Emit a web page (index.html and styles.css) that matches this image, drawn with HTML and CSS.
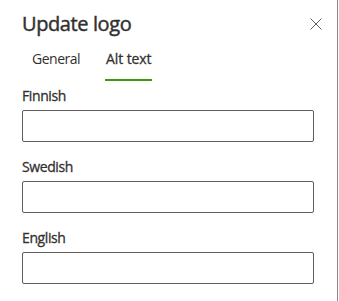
FILE: index.html
```html
<!DOCTYPE html>
<html lang="en">
<head>
<meta charset="utf-8">
<title>Update logo</title>
<link rel="stylesheet" href="styles.css">
</head>
<body>
<div class="panel">
  <div class="header">
    <h1 class="title">Update logo</h1>
    <button class="close" aria-label="Close">
      <svg width="12" height="12" viewBox="0 0 12 12"><path d="M0.5 0.5 L11.5 11.5 M11.5 0.5 L0.5 11.5" stroke="#605e5c" stroke-width="1" fill="none"/></svg>
    </button>
  </div>
  <div class="tabs">
    <span class="tab">General</span>
    <span class="tab active">Alt text</span>
  </div>
  <div class="fields">
    <div class="field">
      <label class="label">Finnish</label>
      <input class="input" type="text">
    </div>
    <div class="field">
      <label class="label">Swedish</label>
      <input class="input" type="text">
    </div>
    <div class="field">
      <label class="label">English</label>
      <input class="input" type="text">
    </div>
  </div>
</div>
</body>
</html>
```
FILE: styles.css
```css
html, body {
  margin: 0;
  padding: 0;
  background: #ffffff;
}
body {
  font-family: "Open Sans", "Noto Sans", sans-serif;
  color: #323130;
}
.panel {
  box-sizing: border-box;
  width: 338px;
  height: 301px;
  border-right: 1px solid #8a8886;
  padding-left: 22px;
  overflow: hidden;
}
.header {
  display: flex;
  align-items: flex-start;
  justify-content: space-between;
  padding-top: 10px;
  height: 27px;
}
.title {
  margin: 0;
  font-size: 20px;
  line-height: 28px;
  font-weight: 400;
  letter-spacing: -0.4px;
  -webkit-text-stroke: 0.45px #323130;
  color: #323130;
}
.close {
  border: 0;
  background: none;
  padding: 0;
  margin: 8px 15px 0 0;
  width: 12px;
  height: 12px;
  display: flex;
}
.tabs {
  display: flex;
  gap: 24px;
  padding-left: 9px;
  height: 44px;
}
.tab {
  position: relative;
  font-size: 14px;
  line-height: 44px;
  padding: 0 1px;
  letter-spacing: -0.5px;
  color: #323130;
}
.tab.active {
  letter-spacing: -0.1px;
  -webkit-text-stroke: 0.3px #323130;
}
.tab.active::after {
  content: "";
  position: absolute;
  left: 0;
  right: 0;
  bottom: 0;
  height: 2px;
  background: #3c9a0c;
}
.fields {
  display: flex;
  flex-direction: column;
  gap: 10px;
  width: 292px;
}
.field {
  display: flex;
  flex-direction: column;
}
.label {
  font-size: 14px;
  line-height: 20px;
  font-weight: 400;
  letter-spacing: -0.4px;
  -webkit-text-stroke: 0.3px #323130;
  padding: 5px 0 4px;
  color: #323130;
}
.input {
  box-sizing: border-box;
  width: 292px;
  height: 32px;
  margin: 0;
  border: 1px solid #605e5c;
  border-radius: 2px;
  background: #fff;
  font-family: inherit;
}
```
